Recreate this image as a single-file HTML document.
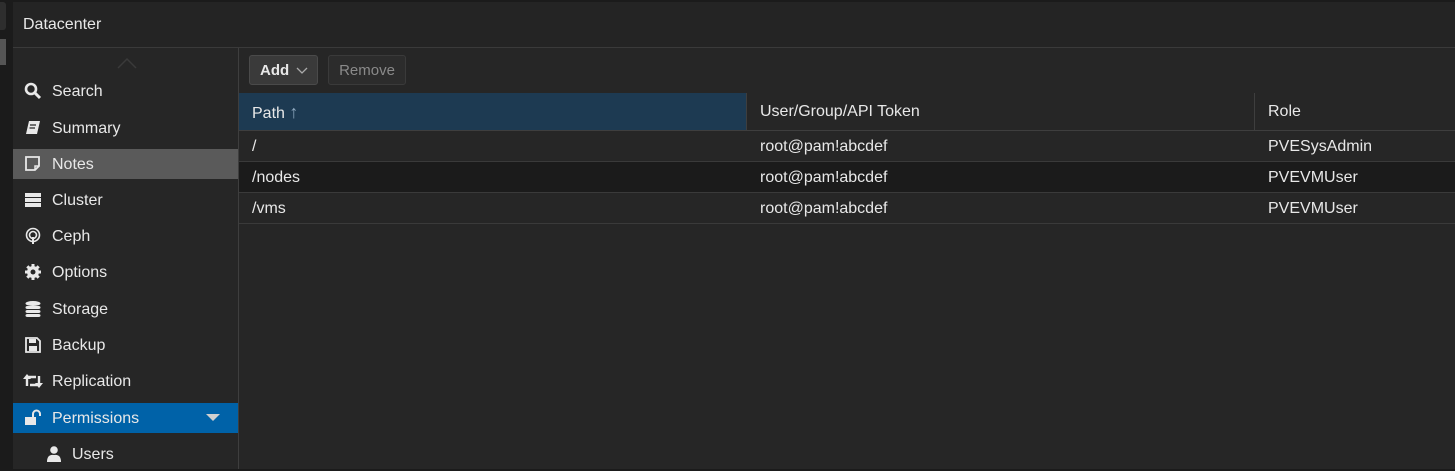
<!DOCTYPE html>
<html><head><style>
*{margin:0;padding:0;box-sizing:border-box}
body{width:1455px;height:469px;background:#1b1b1b;font-family:"Liberation Sans",sans-serif;font-size:16px;color:#e8e8e8;position:relative;overflow:hidden}
.abs{position:absolute}
#hdr{left:13px;top:2px;width:1442px;height:46px;background:#242424;border-bottom:1px solid #3a3a3a}
#hdr span{position:absolute;left:10px;top:14px;font-size:16px}
#side{left:13px;top:48px;width:226px;height:421px;background:#262626;border-right:1px solid #3e3e3e}
.it{position:absolute;left:0;width:225px;height:30px;line-height:32px;padding-left:39px}
.it svg{position:absolute;left:11px;top:6px}
#main{left:239px;top:48px;width:1216px;height:421px;background:#262626}
.btn{position:absolute;top:7px;height:30px;border:1px solid #4a4a4a;border-radius:3px;line-height:29px;font-size:15px}
.gh{position:absolute;top:45px;height:38px;line-height:38px;border-bottom:1px solid #3e3e3e;padding-left:13px}
.row{position:absolute;left:0;width:1216px;height:31px;border-bottom:1px solid #3a3a3a;line-height:32px}
.row span{position:absolute}
</style></head><body>
<div class="abs" style="left:0;top:2px;width:6px;height:28px;background:#2e2e2e;border-radius:0 3px 3px 0"></div>
<div class="abs" style="left:0;top:39px;width:6px;height:26px;background:#555"></div>
<div id="hdr" class="abs"><span>Datacenter</span></div>
<div id="side" class="abs">
<svg class="abs" style="left:104px;top:9px" width="20" height="12"><path d="M1 11 L10 2 L19 11" stroke="#3a3a3a" stroke-width="1.5" fill="none"/></svg>
<div class="it" style="top:28px"><svg width="18" height="18"><circle cx="7" cy="7" r="5" stroke="#e8e8e8" stroke-width="2.6" fill="none"/><path d="M10.5 10.5 L16 16" stroke="#e8e8e8" stroke-width="3"/></svg>Search</div>
<div class="it" style="top:65px"><svg width="18" height="18"><path d="M5 2 H16 L13 15 H2 Z" fill="#e8e8e8"/><path d="M6 6 H12 M5.5 9 H11" stroke="#262626" stroke-width="1.2"/></svg>Summary</div>
<div class="it" style="top:101px;background:#5a5a5a"><svg width="18" height="18"><path d="M2 2 H15 V11 L11 15 H2 Z" stroke="#e8e8e8" stroke-width="1.8" fill="none"/><path d="M15 11 H11 V15" stroke="#e8e8e8" stroke-width="1.5" fill="none"/></svg>Notes</div>
<div class="it" style="top:137px"><svg width="18" height="18"><rect x="1" y="2" width="16" height="4" fill="#e8e8e8"/><rect x="1" y="7" width="16" height="4" fill="#e8e8e8"/><rect x="1" y="12" width="16" height="4" fill="#e8e8e8"/></svg>Cluster</div>
<div class="it" style="top:173px"><svg width="18" height="18"><circle cx="9" cy="8" r="6.5" stroke="#e8e8e8" stroke-width="1.6" fill="none"/><circle cx="9" cy="8" r="3.5" stroke="#e8e8e8" stroke-width="1.6" fill="none"/><path d="M9 10 V17" stroke="#e8e8e8" stroke-width="2"/></svg>Ceph</div>
<div class="it" style="top:209px"><svg width="18" height="18"><circle cx="9" cy="9" r="6" fill="#e8e8e8"/><path d="M9 1V17M1 9H17M3.3 3.3L14.7 14.7M14.7 3.3L3.3 14.7" stroke="#e8e8e8" stroke-width="3"/><circle cx="9" cy="9" r="2.5" fill="#262626"/></svg>Options</div>
<div class="it" style="top:246px"><svg width="18" height="18"><ellipse cx="9" cy="3.5" rx="7.5" ry="2.5" fill="#e8e8e8"/><rect x="1.5" y="6" width="15" height="3" rx="2" fill="#e8e8e8"/><rect x="1.5" y="10" width="15" height="3" rx="2" fill="#e8e8e8"/><rect x="1.5" y="14" width="15" height="3" rx="2" fill="#e8e8e8"/></svg>Storage</div>
<div class="it" style="top:282px"><svg width="18" height="18"><path d="M2 2 H13 L16 5 V16 H2 Z" stroke="#e8e8e8" stroke-width="1.8" fill="none"/><rect x="5" y="3" width="7" height="4" fill="#e8e8e8"/><rect x="5" y="10" width="8" height="5" fill="#e8e8e8"/></svg>Backup</div>
<div class="it" style="top:318px"><svg width="20" height="18" style="left:10px"><path d="M4 14 V5 H13" stroke="#e8e8e8" stroke-width="2.4" fill="none"/><path d="M0 7 L4 2 L8 7Z" fill="#e8e8e8"/><path d="M16 4 V13 H7" stroke="#e8e8e8" stroke-width="2.4" fill="none"/><path d="M12 11 L16 16 L20 11Z" fill="#e8e8e8"/></svg>Replication</div>
<div class="it" style="top:355px;background:#0062a8"><svg width="18" height="18"><rect x="1" y="8" width="11" height="8" fill="#e8e8e8"/><path d="M9 8 V5 A3.5 3.5 0 0 1 16 5 V7" stroke="#e8e8e8" stroke-width="2" fill="none"/></svg>Permissions<svg style="left:193px;top:11px" width="14" height="8"><path d="M0 0 H14 L7 7Z" fill="#d0d0d0"/></svg></div>
<div class="it" style="top:391px;padding-left:59px"><svg style="left:33px" width="16" height="18"><circle cx="8" cy="5" r="3.8" fill="#e8e8e8"/><path d="M1 17 Q1 9 8 10 Q15 9 15 17Z" fill="#e8e8e8"/></svg>Users</div>
</div>
<div id="main" class="abs">
<div class="btn" style="left:10px;width:69px;background:#3a3a3a;padding-left:10px;font-weight:bold;color:#e8e8e8">Add<svg style="position:absolute;left:46px;top:11px" width="12" height="7"><path d="M1 1 L6 6 L11 1" stroke="#aaa" stroke-width="1.3" fill="none"/></svg></div>
<div class="btn" style="left:89px;width:78px;background:#2c2c2c;color:#8a8a8a;text-align:center;border-color:#3a3a3a">Remove</div>
<div class="gh" style="left:0;width:508px;background:#1d3a52;border-right:1px solid #3e3e3e">Path <span style="color:#8ca6bd;font-size:18px">↑</span></div>
<div class="gh" style="left:508px;width:508px;border-right:1px solid #3e3e3e;background:#262626">User/Group/API Token</div>
<div class="gh" style="left:1016px;width:200px;background:#262626">Role</div>
<div class="row" style="top:83px"><span style="left:13px">/</span><span style="left:521px">root@pam!abcdef</span><span style="left:1029px">PVESysAdmin</span></div>
<div class="row" style="top:114px;background:#1b1b1b"><span style="left:13px">/nodes</span><span style="left:521px">root@pam!abcdef</span><span style="left:1029px">PVEVMUser</span></div>
<div class="row" style="top:145px"><span style="left:13px">/vms</span><span style="left:521px">root@pam!abcdef</span><span style="left:1029px">PVEVMUser</span></div>
</div>
</body></html>
